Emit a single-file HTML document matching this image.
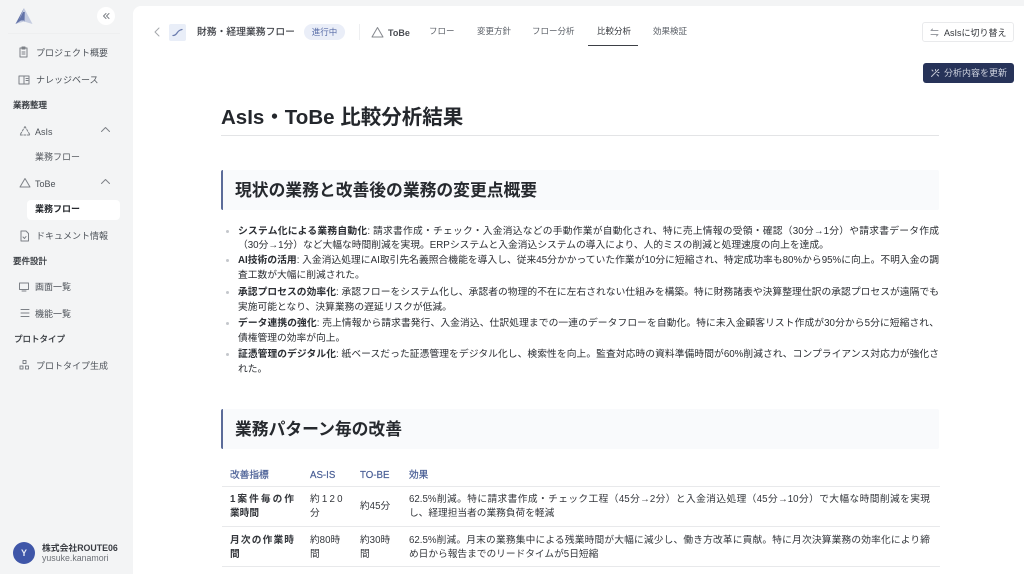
<!DOCTYPE html>
<html lang="ja"><head><meta charset="utf-8">
<style>
html,body{margin:0;padding:0}
body{width:1024px;height:574px;overflow:hidden;position:relative;background:#f3f4f5;font-family:"Liberation Sans","Noto Sans CJK JP",sans-serif;color:#24272c}
.a{position:absolute;white-space:nowrap}
svg.a{fill:none;stroke:#7d8187;stroke-width:1;stroke-linecap:round;stroke-linejoin:round}
#main{position:absolute;left:133px;top:6px;width:891px;height:568px;background:#fff;border-top-left-radius:8px;overflow:hidden}
.nav{font-size:9px;color:#4d5259;line-height:14px}
.sec{font-size:8.5px;color:#33373d;-webkit-text-stroke:.25px #33373d;line-height:12px}
.tab{font-size:8.5px;color:#5c6168;line-height:12px}
.l{position:absolute;left:238px;width:701px;font-size:9.75px;line-height:14px;color:#2b2e33;white-space:nowrap}
.j{text-align:justify;text-align-last:justify}
.dot{position:absolute;left:226px;width:3px;height:3px;border-radius:50%;background:#c4c7cc}
.h2b{position:absolute;left:221px;width:718px;height:40px;background:#f9fafc;border-left:2px solid #5b6b99;border-radius:2px;box-sizing:border-box}
.h2{position:absolute;left:235px;font-size:16.8px;font-weight:700;line-height:24px;color:#26292e;white-space:nowrap}
.th{font-size:9.7px;color:#4a5f96;-webkit-text-stroke:.2px #4a5f96;line-height:14px}
.td{font-size:9.7px;color:#33363b;line-height:14px}
.hr{position:absolute;left:222px;width:718px;height:1px;background:#e8e9eb}
</style></head><body>

<!-- sidebar -->
<svg class="a" style="left:14px;top:8px;stroke:none" width="20" height="17" viewBox="0 0 20 17"><path d="M10 0L18.500 16 10 13.500 1.500 16Z" fill="#c5cce0"/><path d="M10 0L1.500 16 7 12.500 10 12.500 10.500 14 10.800 4 9 4 5 12Z" fill="#6373a8"/></svg>
<div class="a" style="left:97px;top:7px;width:18px;height:18px;border-radius:50%;background:#fff"></div>
<svg class="a" style="left:101px;top:11px" width="10" height="10" viewBox="0 0 10 10"><path d="M5 2.500L2.500 5 5 7.500M8 2.500L5.500 5 8 7.500"/></svg>
<div class="a" style="left:8px;top:33px;width:112px;height:1px;background:#eeeff0"></div>

<svg class="a" style="left:18px;top:46px" width="11" height="12" viewBox="0 0 11 12"><path d="M2 2h7v9H2zM4 1h3v2H4zM4 6h3M4 8h3"/></svg>
<div class="a nav" style="left:36px;top:46px">プロジェクト概要</div>
<svg class="a" style="left:18px;top:74px" width="12" height="11" viewBox="0 0 12 11"><path d="M1 2h10v8H1zM6 2v8M8 4.500h2M8 6.500h2"/></svg>
<div class="a nav" style="left:36px;top:73px">ナレッジベース</div>
<div class="a sec" style="left:13px;top:99px">業務整理</div>
<svg class="a" style="left:19px;top:125px" width="12" height="11" viewBox="0 0 12 11"><path d="M6 1.500L11 10H1Z" stroke-dasharray="2 1.500"/></svg>
<div class="a nav" style="left:35px;top:125px">AsIs</div>
<svg class="a" style="left:100px;top:126px" width="11" height="7" viewBox="0 0 11 7"><path d="M1.500 5.500L5.500 1.500l4 4"/></svg>
<div class="a nav" style="left:35px;top:150px;color:#55595f">業務フロー</div>
<svg class="a" style="left:19px;top:177px" width="12" height="11" viewBox="0 0 12 11"><path d="M6 1.500L11 10H1Z"/></svg>
<div class="a nav" style="left:35px;top:177px">ToBe</div>
<svg class="a" style="left:100px;top:178px" width="11" height="7" viewBox="0 0 11 7"><path d="M1.500 5.500L5.500 1.500l4 4"/></svg>
<div class="a" style="left:27px;top:200px;width:93px;height:20px;background:#fff;border-radius:4px"></div>
<div class="a nav" style="left:35px;top:202px;font-weight:700;color:#25282d">業務フロー</div>
<svg class="a" style="left:19px;top:230px" width="11" height="12" viewBox="0 0 11 12"><path d="M2 1h5l2.500 2.500V11H2zM4 7l1.500 1.500L7 6.500"/></svg>
<div class="a nav" style="left:36px;top:229px">ドキュメント情報</div>
<div class="a sec" style="left:13px;top:255px">要件設計</div>
<svg class="a" style="left:18px;top:281px" width="12" height="11" viewBox="0 0 12 11"><path d="M1.500 2h9v6.500h-9zM4 10h4"/></svg>
<div class="a nav" style="left:35px;top:280px">画面一覧</div>
<svg class="a" style="left:19px;top:308px" width="11" height="10" viewBox="0 0 11 10"><path d="M2 1.500h8M2 5h8M2 8.500h8"/></svg>
<div class="a nav" style="left:35px;top:307px">機能一覧</div>
<div class="a sec" style="left:14px;top:333px">プロトタイプ</div>
<svg class="a" style="left:19px;top:359px" width="11" height="11" viewBox="0 0 11 11"><path d="M4 1.500h3v3H4zM1 7h3v3H1zM6.500 7h3v3h-3z"/></svg>
<div class="a nav" style="left:36px;top:359px">プロトタイプ生成</div>

<div class="a" style="left:13px;top:542px;width:22px;height:22px;border-radius:50%;background:#3f56a8;color:#e8ebf6;font-size:9px;font-weight:700;line-height:22px;text-align:center">Y</div>
<div class="a" style="left:42px;top:542px;font-size:8.8px;font-weight:700;color:#3a3d43;line-height:13px">株式会社ROUTE06</div>
<div class="a" style="left:42px;top:552px;font-size:8.8px;color:#6d7177;line-height:13px">yusuke.kanamori</div>

<div id="main"></div>

<!-- top bar -->
<svg class="a" style="left:153px;top:27px" width="8" height="10" viewBox="0 0 8 10"><path d="M6 1L2 5l4 4" stroke="#a5a8ad"/></svg>
<div class="a" style="left:169px;top:24px;width:17px;height:17px;background:#e9eef8;border-radius:2px"></div>
<svg class="a" style="left:172px;top:28px" width="11" height="9" viewBox="0 0 11 9"><path d="M1 7.500C3 7.500 4 6.500 5 5s2-3 5-3.500" stroke="#6b7cae" stroke-width="1.300"/></svg>
<div class="a" style="left:197px;top:25px;font-size:9.8px;-webkit-text-stroke:.15px #3b3e44;color:#3b3e44;line-height:15px">財務・経理業務フロー</div>
<div class="a" style="left:304px;top:24px;width:41px;height:16px;border-radius:8px;background:#eaeef8;color:#5a6ea8;font-size:8.5px;line-height:16px;text-align:center">進行中</div>
<div class="a" style="left:359px;top:24px;width:1px;height:16px;background:#eeeff1"></div>
<svg class="a" style="left:371px;top:26px" width="13" height="12" viewBox="0 0 13 12"><path d="M6.500 1.500L12 11H1Z" stroke="#85888e"/></svg>
<div class="a" style="left:388px;top:26px;font-size:9px;font-weight:700;color:#4a4d53;line-height:14px">ToBe</div>
<div class="a tab" style="left:429px;top:25px">フロー</div>
<div class="a tab" style="left:477px;top:25px">変更方針</div>
<div class="a tab" style="left:532px;top:25px">フロー分析</div>
<div class="a tab" style="left:597px;top:25px;color:#33363b">比較分析</div>
<div class="a" style="left:588px;top:45px;width:50px;height:1px;background:#3d4046"></div>
<div class="a tab" style="left:653px;top:25px">効果検証</div>

<div class="a" style="left:922px;top:22px;width:92px;height:20px;background:#fff;border:1px solid #e9eaec;border-radius:3px;box-sizing:border-box"></div>
<svg class="a" style="left:930px;top:28px" width="9" height="9" viewBox="0 0 9 9"><path d="M1 2.500h7M1 6.500h7M1 2.500l1.500-1.500M8 6.500L6.500 8" stroke="#9a9da3"/></svg>
<div class="a" style="left:944px;top:26px;font-size:9px;color:#33363b;line-height:14px">AsIsに切り替え</div>

<div class="a" style="left:923px;top:63px;width:91px;height:20px;background:#273359;border-radius:3px"></div>
<svg class="a" style="left:930px;top:68px" width="10" height="10" viewBox="0 0 10 10"><path d="M1.500 8.500L8.500 1.500M2 2l1 1M7 6.500l1.500 1.500M5.500 1.500v1M8 4.500h1" stroke="#c5c9d6"/></svg>
<div class="a" style="left:944px;top:66px;font-size:9px;color:#cfd3df;line-height:14px">分析内容を更新</div>

<!-- title -->
<div class="a" style="left:221px;top:104px;font-size:20.5px;font-weight:700;line-height:28px;color:#24272c">AsIs・ToBe 比較分析結果</div>
<div class="a" style="left:221px;top:135px;width:718px;height:1px;background:#e3e4e6"></div>

<!-- section 1 -->
<div class="h2b" style="top:170px"></div>
<div class="h2" style="top:179px">現状の業務と改善後の業務の変更点概要</div>

<div class="dot" style="top:230px"></div>
<div class="l j" style="top:225px"><b>システム化による業務自動化</b>: 請求書作成・チェック・入金消込などの手動作業が自動化され、特に売上情報の受領・確認（30分→1分）や請求書データ作成</div>
<div class="l" style="top:238.500px">（30分→1分）など大幅な時間削減を実現。ERPシステムと入金消込システムの導入により、人的ミスの削減と処理速度の向上を達成。</div>
<div class="dot" style="top:259px"></div>
<div class="l j" style="top:254px"><b>AI技術の活用</b>: 入金消込処理にAI取引先名義照合機能を導入し、従来45分かかっていた作業が10分に短縮され、特定成功率も80%から95%に向上。不明入金の調</div>
<div class="l" style="top:269px">査工数が大幅に削減された。</div>
<div class="dot" style="top:291px"></div>
<div class="l j" style="top:286px"><b>承認プロセスの効率化</b>: 承認フローをシステム化し、承認者の物理的不在に左右されない仕組みを構築。特に財務諸表や決算整理仕訳の承認プロセスが遠隔でも</div>
<div class="l" style="top:301px">実施可能となり、決算業務の遅延リスクが低減。</div>
<div class="dot" style="top:322px"></div>
<div class="l j" style="top:317px"><b>データ連携の強化</b>: 売上情報から請求書発行、入金消込、仕訳処理までの一連のデータフローを自動化。特に未入金顧客リスト作成が30分から5分に短縮され、</div>
<div class="l" style="top:332px">債権管理の効率が向上。</div>
<div class="dot" style="top:353px"></div>
<div class="l j" style="top:348px"><b>証憑管理のデジタル化</b>: 紙ベースだった証憑管理をデジタル化し、検索性を向上。監査対応時の資料準備時間が60%削減され、コンプライアンス対応力が強化さ</div>
<div class="l" style="top:363px">れた。</div>

<!-- section 2 -->
<div class="h2b" style="top:409px"></div>
<div class="h2" style="top:418px">業務パターン毎の改善</div>

<div class="a th" style="left:230px;top:469px">改善指標</div>
<div class="a th" style="left:310px;top:469px">AS-IS</div>
<div class="a th" style="left:360px;top:469px">TO-BE</div>
<div class="a th" style="left:409px;top:469px">効果</div>
<div class="hr" style="top:486px"></div>

<div class="a td" style="left:230px;top:493px;width:64px;font-weight:700;text-align:justify;text-align-last:justify">1案件毎の作</div>
<div class="a td" style="left:230px;top:507px;font-weight:700">業時間</div>
<div class="a td" style="left:310px;top:493px;letter-spacing:2.2px">約120</div>
<div class="a td" style="left:310px;top:507px">分</div>
<div class="a td" style="left:360px;top:500px">約45分</div>
<div class="a td" style="left:409px;top:493px;width:521px;text-align:justify;text-align-last:justify">62.5%削減。特に請求書作成・チェック工程（45分→2分）と入金消込処理（45分→10分）で大幅な時間削減を実現</div>
<div class="a td" style="left:409px;top:507px">し、経理担当者の業務負荷を軽減</div>
<div class="hr" style="top:526px"></div>

<div class="a td" style="left:230px;top:534px;width:64px;font-weight:700;text-align:justify;text-align-last:justify">月次の作業時</div>
<div class="a td" style="left:230px;top:548px;font-weight:700">間</div>
<div class="a td" style="left:310px;top:534px">約80時</div>
<div class="a td" style="left:310px;top:548px">間</div>
<div class="a td" style="left:360px;top:534px">約30時</div>
<div class="a td" style="left:360px;top:548px">間</div>
<div class="a td" style="left:409px;top:534px;width:521px;text-align:justify;text-align-last:justify">62.5%削減。月末の業務集中による残業時間が大幅に減少し、働き方改革に貢献。特に月次決算業務の効率化により締</div>
<div class="a td" style="left:409px;top:548px">め日から報告までのリードタイムが5日短縮</div>
<div class="hr" style="top:566px"></div>

</body></html>
